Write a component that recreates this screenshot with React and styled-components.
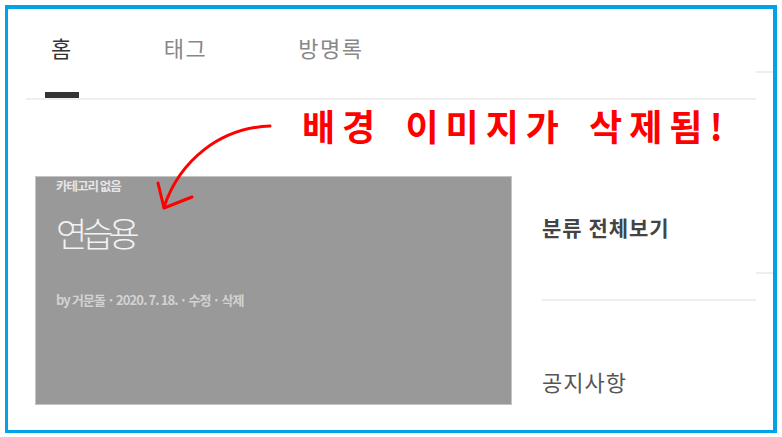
import React from "react";
import styled, { createGlobalStyle } from "styled-components";

const Global = createGlobalStyle`
  html, body { margin: 0; padding: 0; background: #fff; }
  body { font-family: "Noto Sans CJK KR", "Noto Sans", sans-serif; }
`;

const Frame = styled.div`
  box-sizing: border-box;
  margin: 5px 0 0 5px;
  width: 772px;
  height: 428px;
  border-style: solid;
  border-color: #00a2e8;
  border-width: 4px 4px 3px 3px;
  padding-left: 18px;
  display: flex;
  overflow: hidden;
`;

const Main = styled.div`
  position: relative;
  width: 730px;
  display: flex;
  flex-direction: column;
`;

const Gutter = styled.div`
  flex: 1;
  display: flex;
  flex-direction: column;
  padding-top: 62px;
`;

const GutterLine = styled.div`
  height: 2px;
  background: #eeeeee;
  margin-top: ${(p) => p.$gap || 0}px;
`;

const Nav = styled.nav`
  display: flex;
  height: 89px;
  padding-left: 25px;
  gap: 91px;
  border-bottom: 2px solid #eeeeee;
`;

const NavItem = styled.div`
  position: relative;
  box-sizing: border-box;
  height: 100%;
  padding-top: 27px;
  font-size: 22px;
  line-height: 22px;
  letter-spacing: 1.5px;
  color: ${(p) => (p.$active ? "#333333" : "#888888")};

  &::after {
    content: "";
    display: ${(p) => (p.$active ? "block" : "none")};
    position: absolute;
    left: -6px;
    bottom: 0;
    width: 34px;
    height: 6px;
    background: #333333;
  }
`;

const Body = styled.div`
  display: flex;
  padding-top: 76px;
`;

const Card = styled.article`
  box-sizing: border-box;
  margin-left: 9px;
  width: 477px;
  height: 229px;
  background: #999999;
  border: 1px solid #c4c4c4;
  padding: 2px 0 0 20px;
  display: flex;
  flex-direction: column;
`;

const Category = styled.div`
  font-size: 12.5px;
  line-height: 14px;
  font-weight: 700;
  letter-spacing: -1px;
  color: #e6e6e6;
`;

const Title = styled.h2`
  margin: 21px 0 0;
  font-size: 34px;
  line-height: 37px;
  font-weight: 300;
  letter-spacing: -5px;
  color: #f2f2f2;
`;

const Meta = styled.div`
  margin-top: 41px;
  font-size: 13px;
  line-height: 15px;
  font-weight: 700;
  letter-spacing: -0.9px;
  color: #d2d2d2;
`;

const Sidebar = styled.aside`
  margin-left: 30px;
  width: 214px;
  display: flex;
  flex-direction: column;
  padding-top: 40px;
`;

const SideTitle = styled.div`
  font-size: 21px;
  line-height: 22px;
  font-weight: 700;
  letter-spacing: 1px;
  color: #444444;
`;

const SideDivider = styled.div`
  margin-top: 61px;
  height: 2px;
  background: #eeeeee;
`;

const SideLink = styled.div`
  margin-top: 69px;
  font-size: 22px;
  line-height: 22px;
  letter-spacing: 1px;
  color: #555555;
`;

const Note = styled.div`
  position: absolute;
  left: 276px;
  top: 98px;
  font-size: 36px;
  line-height: 36px;
  font-weight: 700;
  letter-spacing: 7px;
  word-spacing: 8px;
  color: #ff0000;
  white-space: nowrap;
`;

const Arrow = styled.svg`
  position: absolute;
  left: 114px;
  top: 101px;
  overflow: visible;
`;

export default function App() {
  return (
    <>
      <Global />
      <Frame>
        <Main>
          <Nav>
            <NavItem $active>홈</NavItem>
            <NavItem>태그</NavItem>
            <NavItem>방명록</NavItem>
          </Nav>
          <Body>
            <Card>
              <Category>카테고리 없음</Category>
              <Title>연습용</Title>
              <Meta>by 거문돌 · 2020. 7. 18. · 수정 · 삭제</Meta>
            </Card>
            <Sidebar>
              <SideTitle>분류 전체보기</SideTitle>
              <SideDivider />
              <SideLink>공지사항</SideLink>
            </Sidebar>
          </Body>
          <Note>배경 이미지가 삭제됨!</Note>
          <Arrow width="160" height="120" viewBox="140 110 160 120">
            <path
              d="M270 126 C220 128 180 160 164 207"
              fill="none"
              stroke="#ff0000"
              strokeWidth="3"
              strokeLinecap="round"
            />
            <path
              d="M158 183 L164 208 L192 197"
              fill="none"
              stroke="#ff0000"
              strokeWidth="3"
              strokeLinecap="round"
              strokeLinejoin="round"
            />
          </Arrow>
        </Main>
        <Gutter>
          <GutterLine />
          <GutterLine $gap={199} />
        </Gutter>
      </Frame>
    </>
  );
}
